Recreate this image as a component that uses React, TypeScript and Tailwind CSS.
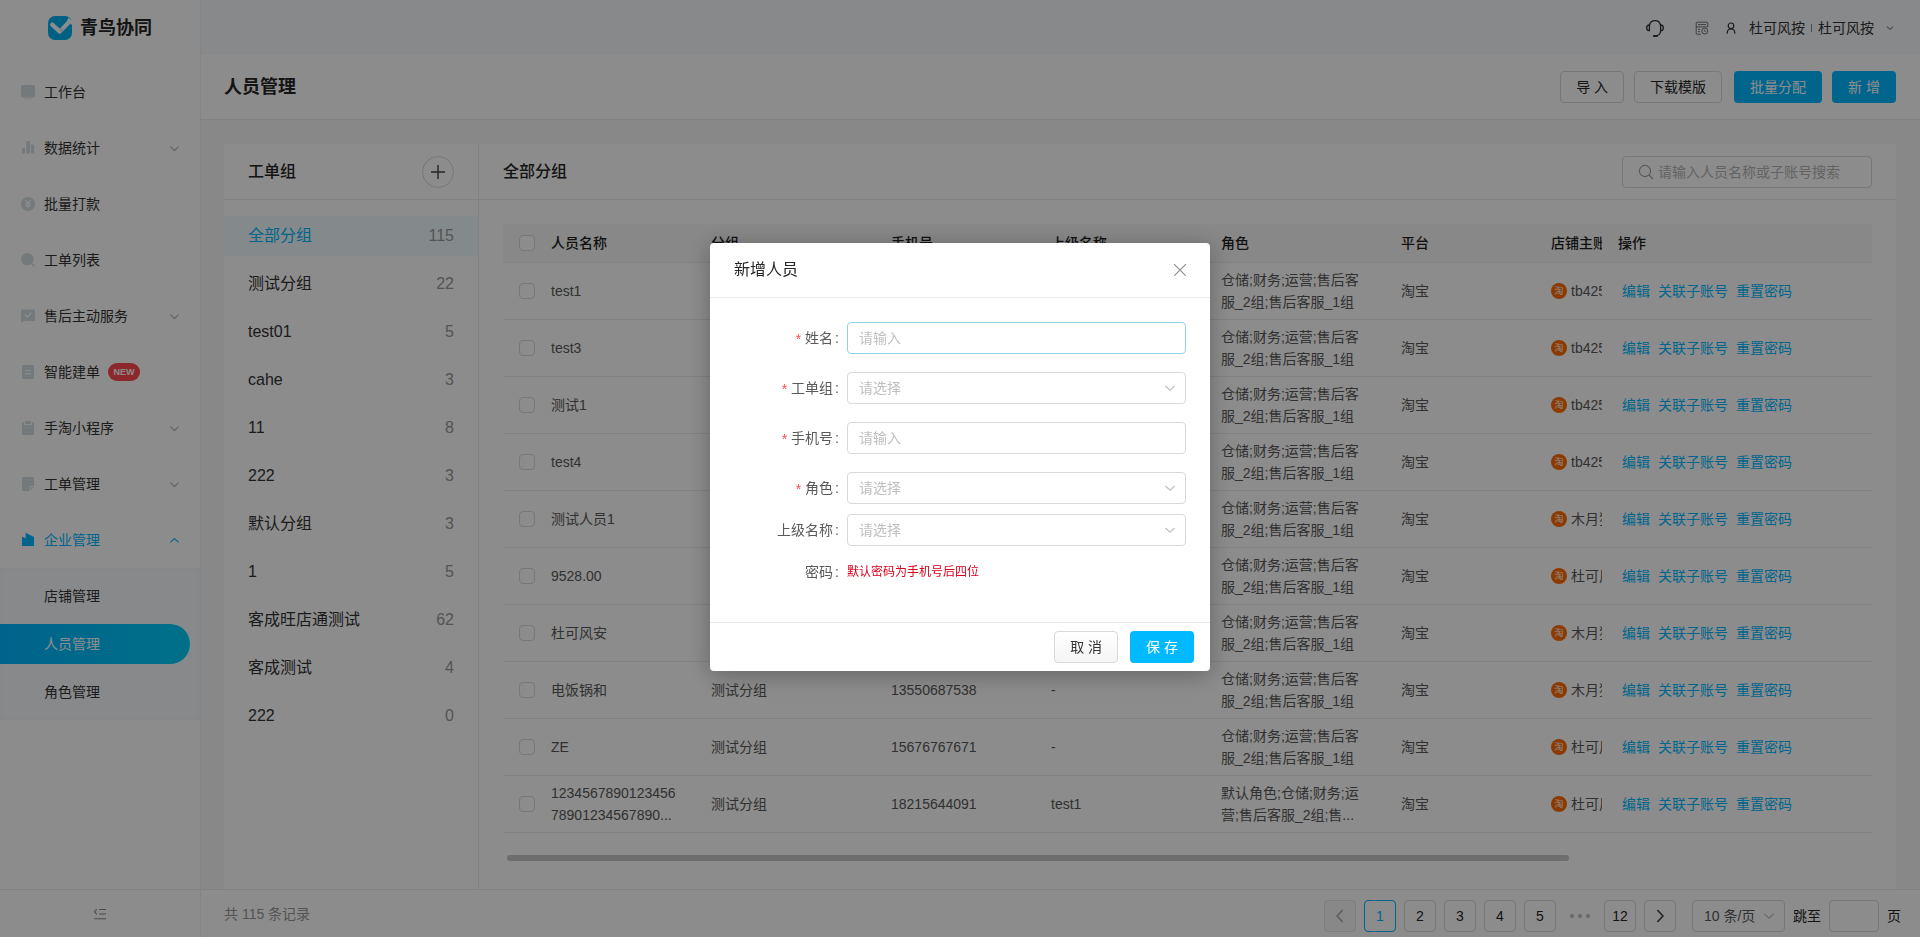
import React from 'react';

type IconProps = { className?: string };

function Chevron({ className = '', up = false }: { className?: string; up?: boolean }) {
  return (
    <svg viewBox="0 0 12 12" fill="none" stroke="currentColor" strokeWidth="1.2" className={className} aria-hidden="true">
      <path d={up ? 'M1.5 8 6 3.8 10.5 8' : 'M1.5 4 6 8.2 10.5 4'} />
    </svg>
  );
}

function Logo() {
  return (
    <svg viewBox="0 0 24 24" className="size-6" aria-hidden="true">
      <rect width="24" height="24" rx="7" fill="#00b0f0" />
      <path d="M20.4 1.6 24 5V9L19 5Z" fill="#fff" />
      <path d="M4.2 8.6 11.6 15.4" stroke="#fff" strokeWidth="4.2" strokeLinecap="round" />
      <path d="M11.8 15.6 21.8 5.2" stroke="#fff" strokeWidth="4.2" strokeLinecap="round" />
      <path d="M12.4 11.4 15.6 14.6 12.4 17.4Z" fill="#c4ebfb" />
    </svg>
  );
}

const menuShapes: Record<string, React.ReactNode> = {
  desk: <path d="M1 2Q1 1 2 1H14Q15 1 15 2V12Q15 13 14 13H2Q1 13 1 12ZM3 13.4H13V14.4H3Z" />,
  chart: <path d="M2 8H5V13.5H2ZM6.4 1H10V13.5H6.4ZM11 4.6H14.2V13.5H11Z" />,
  coin: (
    <>
      <circle cx="8" cy="8" r="7" />
      <path d="M5.4 4 8 7.2 10.6 4M5.2 7.6H10.8M5.2 9.8H10.8M8 7.2V12.2" stroke="#fff" strokeWidth="1.2" fill="none" />
    </>
  ),
  search: (
    <>
      <circle cx="7.4" cy="7.2" r="6.2" />
      <path d="M11 11 14.6 14.4" stroke="currentColor" strokeWidth="1.5" />
    </>
  ),
  service: (
    <>
      <path d="M1 1.5H15V13H4L1 14.8Z" />
      <path d="M5 6.6 7.5 9 11.3 4.8" stroke="#fff" strokeWidth="1.5" fill="none" />
    </>
  ),
  form: (
    <>
      <rect x="2" y="1" width="12" height="14" rx="1" />
      <path d="M5 6.6H11M5 9.6H11" stroke="#fff" strokeWidth="1.3" />
    </>
  ),
  clip: (
    <>
      <path d="M2 2.5H4V5H12V2.5H14V15H2Z" />
      <rect x="5" y="1" width="6" height="3" />
    </>
  ),
  note: <path d="M3 1H13Q14 1 14 2V10H9.5V15H3Q2 15 2 14V2Q2 1 3 1ZM10.6 11H14L10.6 14.6Z" />,
  company: <path d="M2 4.4 5.6 6.6V.8L14 5V14H2Z" />,
};

function MenuIcon({ name, active }: { name: string; active?: boolean }) {
  return (
    <svg viewBox="0 0 16 16" fill="currentColor" className={`size-4 ${active ? 'text-[#00b9ff]' : 'text-[#d3dce2]'}`} aria-hidden="true">
      {menuShapes[name]}
    </svg>
  );
}

function HeadsetIcon({ className = '' }: IconProps) {
  return (
    <svg viewBox="0 0 20 20" fill="none" stroke="currentColor" strokeWidth="1.3" className={className} aria-hidden="true">
      <path d="M4.4 7.4A5.7 5.9 0 0 1 15.6 7.4" />
      <path d="M4.4 7V12.6H3.8Q1.7 12.4 1.7 9.8T4.4 7ZM15.6 7V12.6H16.2Q18.3 12.4 18.3 9.8T15.6 7Z" />
      <path d="M15.8 12.8Q15.4 16.8 11.6 17.8" />
      <path d="M9 18H11.6" strokeWidth="2.2" strokeLinecap="round" />
    </svg>
  );
}

function LogIcon({ className = '' }: IconProps) {
  return (
    <svg viewBox="0 0 14 14" fill="none" stroke="currentColor" strokeWidth="1" className={className} aria-hidden="true">
      <path d="M6 13.2H2Q1.2 13.2 1.2 12.4V2Q1.2 1.2 2 1.2H12Q12.8 1.2 12.8 2V6" />
      <path d="M3 3.6H11M1 5.9H12.6M3 8.3H5M3 10.6H5" />
      <circle cx="9.8" cy="10" r="3" />
      <path d="M9.6 8.6V10.4H11" strokeWidth=".8" />
    </svg>
  );
}

function UserIcon({ className = '' }: IconProps) {
  return (
    <svg viewBox="0 0 12 14" fill="none" stroke="currentColor" strokeWidth="1.2" className={className} aria-hidden="true">
      <circle cx="6" cy="4.8" r="2.8" />
      <path d="M2.2 12.8V11.8Q2.4 8 6 8T9.8 11.8V12.8" />
    </svg>
  );
}

function SearchIcon({ className = '' }: IconProps) {
  return (
    <svg viewBox="0 0 16 16" fill="none" stroke="currentColor" strokeWidth="1.1" className={className} aria-hidden="true">
      <circle cx="7" cy="7" r="5.6" />
      <path d="M11 11 15 15" />
    </svg>
  );
}

const menu = [
  { icon: 'desk', label: '工作台' },
  { icon: 'chart', label: '数据统计', expandable: true },
  { icon: 'coin', label: '批量打款' },
  { icon: 'search', label: '工单列表' },
  { icon: 'service', label: '售后主动服务', expandable: true },
  { icon: 'form', label: '智能建单', badge: 'NEW' },
  { icon: 'clip', label: '手淘小程序', expandable: true },
  { icon: 'note', label: '工单管理', expandable: true },
  { icon: 'company', label: '企业管理', expandable: true, active: true },
];

const subMenu = ['店铺管理', '人员管理', '角色管理'];

const groups: [string, number][] = [
  ['全部分组', 115],
  ['测试分组', 22],
  ['test01', 5],
  ['cahe', 3],
  ['11', 8],
  ['222', 3],
  ['默认分组', 3],
  ['1', 5],
  ['客成旺店通测试', 62],
  ['客成测试', 4],
  ['222', 0],
];

const commonRole = '仓储;财务;运营;售后客服_2组;售后客服_1组';

type Row = { name: string; group?: string; phone?: string; parent?: string; role: string; shop: string };

const rows: Row[] = [
  { name: 'test1', role: commonRole, shop: 'tb425' },
  { name: 'test3', role: commonRole, shop: 'tb425' },
  { name: '测试1', role: commonRole, shop: 'tb425' },
  { name: 'test4', role: commonRole, shop: 'tb425' },
  { name: '测试人员1', role: commonRole, shop: '木月狗' },
  { name: '9528.00', role: commonRole, shop: '杜可风' },
  { name: '杜可风安', role: commonRole, shop: '木月狗' },
  { name: '电饭锅和', group: '测试分组', phone: '13550687538', parent: '-', role: commonRole, shop: '木月狗' },
  { name: 'ZE', group: '测试分组', phone: '15676767671', parent: '-', role: commonRole, shop: '杜可风' },
  {
    name: '123456789012345678901234567890...',
    group: '测试分组',
    phone: '18215644091',
    parent: 'test1',
    role: '默认角色;仓储;财务;运营;售后客服_2组;售...',
    shop: '杜可风',
  },
];

const checkboxClass = 'block size-4 appearance-none rounded border border-[#d9d9d9] bg-white';
const plainButton = 'h-8 rounded border border-[#d9d9d9] bg-white px-[15px] text-[#262626]';
const primaryButton = 'h-8 rounded bg-[#00b9ff] px-4 text-white';

function Sidebar() {
  return (
    <aside className="flex w-[201px] shrink-0 flex-col border-r border-[#eef0f2] bg-white">
      <div className="flex h-[56px] items-center gap-2 pl-12">
        <Logo />
        <span className="text-lg leading-6 font-bold text-[#262626]">青鸟协同</span>
      </div>
      <nav className="flex flex-1 flex-col pt-2">
        {menu.map((m) => (
          <a key={m.label} href="#" className={`flex h-14 items-center pr-5 pl-5 ${m.active ? 'text-[#00b9ff]' : 'text-[#333]'}`}>
            <MenuIcon name={m.icon} active={m.active} />
            <span className="ml-2">{m.label}</span>
            {m.badge && (
              <span className="ml-2 flex h-[18px] w-8 items-center justify-center rounded-full bg-[#ff4750] text-[9px] font-bold text-white">
                {m.badge}
              </span>
            )}
            {m.expandable && <Chevron up={m.active} className={`ml-auto size-[11px] ${m.active ? '' : 'text-[#b0b0b0]'}`} />}
          </a>
        ))}
        <div className="flex flex-col gap-2 bg-[#f8fafc] py-2 shadow-[inset_0_0_6px_#ebf1f5]">
          {subMenu.map((s, i) => (
            <a
              key={s}
              href="#"
              className={`flex h-10 items-center pl-11 ${
                i === 1 ? 'mr-2.5 rounded-r-full bg-linear-to-r from-[#00b4ff] to-[#00cdfa] text-white' : 'text-[#333]'
              }`}
            >
              {s}
            </a>
          ))}
        </div>
      </nav>
      <div className="flex h-12 items-center justify-center border-t border-[#ebebeb]">
        <button aria-label="收起菜单" className="text-[#8c8c8c]">
          <svg viewBox="0 0 14 12" fill="none" stroke="currentColor" strokeWidth="1.1" className="h-3 w-3.5" aria-hidden="true">
            <path d="M6 1.5H13M6 6H13M1 10.8H13M3.8 1.2 1.4 3.8 3.8 6.4" />
          </svg>
        </button>
      </div>
    </aside>
  );
}

function TopBar() {
  return (
    <header className="flex h-[55px] items-center justify-end bg-[#f6f9fc] pr-6.5 text-[#333]">
      <HeadsetIcon className="mr-[30px] size-5" />
      <LogIcon className="mr-4 size-3.5 text-[#777]" />
      <UserIcon className="mr-3 h-3.5 w-3" />
      <span>杜可风按</span>
      <span className="mx-1.5 h-2 w-px bg-[#888]" />
      <span>杜可风按</span>
      <Chevron className="ml-3 size-2" />
    </header>
  );
}

function GroupPanel() {
  return (
    <section className="flex w-[255px] shrink-0 flex-col border-r border-[#ebebeb] bg-white">
      <div className="flex h-14 items-center justify-between border-b border-[#ebebeb] px-6">
        <h2 className="text-base font-medium text-[#262626]">工单组</h2>
        <button aria-label="新增工单组" className="flex size-8 items-center justify-center rounded-full border border-[#d9d9d9] text-[#444]">
          <svg viewBox="0 0 14 14" stroke="currentColor" strokeWidth="1.4" className="size-3.5" aria-hidden="true">
            <path d="M7 0V14M0 7H14" />
          </svg>
        </button>
      </div>
      <ul className="flex flex-col gap-2 pt-4 text-base">
        {groups.map(([name, count], i) => (
          <li key={i} className={`flex h-10 items-center justify-between px-6 ${i === 0 ? 'bg-[#f0f9fe] text-[#00b9ff]' : 'text-[#333]'}`}>
            <span>{name}</span>
            <span className="text-[#999]">{count}</span>
          </li>
        ))}
      </ul>
    </section>
  );
}

function StaffTable() {
  return (
    <div className="overflow-hidden">
      <table className="w-[1744px] table-fixed border-separate border-spacing-0 text-left">
        <colgroup>
          <col className="w-8" />
          <col className="w-40" />
          <col className="w-[180px]" />
          <col className="w-40" />
          <col className="w-[170px]" />
          <col className="w-[180px]" />
          <col className="w-[150px]" />
          <col />
          <col className="w-[270px]" />
        </colgroup>
        <thead>
          <tr className="h-[39px] text-[#1f1f1f] [&>th]:border-b [&>th]:border-[#ebebeb] [&>th]:bg-[#f8f8f8] [&>th]:font-medium">
            <th className="pl-4">
              <input type="checkbox" aria-label="全选" className={checkboxClass} />
            </th>
            <th className="px-4">人员名称</th>
            <th className="px-4">分组</th>
            <th className="px-4">手机号</th>
            <th className="px-4">上级名称</th>
            <th className="px-4">角色</th>
            <th className="px-4">平台</th>
            <th className="px-4">店铺主账号</th>
            <th className="sticky right-0 px-4">操作</th>
          </tr>
        </thead>
        <tbody>
          {rows.map((r) => (
            <tr key={r.name} className="h-[57px] text-[#595959] [&>td]:border-b [&>td]:border-[#ebebeb]">
              <td className="pl-4">
                <input type="checkbox" aria-label={`选择 ${r.name}`} className={checkboxClass} />
              </td>
              <td className="px-4 break-all">{r.name}</td>
              <td className="px-4">{r.group}</td>
              <td className="px-4">{r.phone}</td>
              <td className="px-4">{r.parent}</td>
              <td className="px-4 break-all">{r.role}</td>
              <td className="px-4">淘宝</td>
              <td className="px-4">
                <div className="flex items-center gap-1">
                  <span className="flex size-4 items-center justify-center rounded-full bg-[#ff6a00] text-[9px] leading-none text-white">淘</span>
                  <span>{r.shop}</span>
                </div>
              </td>
              <td className="sticky right-0 bg-white pl-5">
                <div className="flex gap-2 text-[#00b9ff]">
                  <a href="#">编辑</a>
                  <a href="#">关联子账号</a>
                  <a href="#">重置密码</a>
                </div>
              </td>
            </tr>
          ))}
        </tbody>
      </table>
    </div>
  );
}

function Pagination() {
  const item = 'flex size-8 items-center justify-center rounded border';
  return (
    <nav aria-label="分页" className="flex items-center gap-2 text-[#262626]">
      <button aria-label="上一页" disabled className={`${item} border-[#e3e3e3] bg-[#f7f7f7] text-[#aaa]`}>
        <Chevron className="size-4 rotate-90" />
      </button>
      <button className={`${item} border-[#00b9ff] text-[#00b9ff]`}>1</button>
      {['2', '3', '4', '5'].map((p) => (
        <button key={p} className={`${item} border-[#d9d9d9]`}>
          {p}
        </button>
      ))}
      <span className="flex size-8 items-center justify-center gap-1">
        <i className="size-1 rounded-full bg-[#bfbfbf]" />
        <i className="size-1 rounded-full bg-[#bfbfbf]" />
        <i className="size-1 rounded-full bg-[#bfbfbf]" />
      </span>
      <button className={`${item} border-[#d9d9d9]`}>12</button>
      <button aria-label="下一页" className={`${item} border-[#d9d9d9] text-[#444]`}>
        <Chevron className="size-4 -rotate-90" />
      </button>
      <div className="relative ml-2">
        <select aria-label="每页条数" className="h-8 w-[93px] appearance-none rounded border border-[#d9d9d9] bg-white pl-[11px] text-[#595959]">
          <option>10 条/页</option>
        </select>
        <Chevron className="pointer-events-none absolute top-2.5 right-2.5 size-3 text-[#bfbfbf]" />
      </div>
      <label htmlFor="jump">跳至</label>
      <input id="jump" className="h-8 w-[50px] rounded border border-[#d9d9d9] bg-white" />
      <span>页</span>
    </nav>
  );
}

type FieldProps = { id: string; label: string; required?: boolean; kind: 'input' | 'select'; focused?: boolean; tight?: boolean };

const fields: FieldProps[] = [
  { id: 'name', label: '姓名', required: true, kind: 'input', focused: true },
  { id: 'group', label: '工单组', required: true, kind: 'select' },
  { id: 'phone', label: '手机号', required: true, kind: 'input' },
  { id: 'role', label: '角色', required: true, kind: 'select', tight: true },
  { id: 'parent', label: '上级名称', kind: 'select', tight: true },
];

function FieldLabel({ id, label, required }: { id?: string; label: string; required?: boolean }) {
  return (
    <label htmlFor={id} className="flex w-1/4 items-center justify-end pr-2 text-[#595959]">
      {required && <span className="mr-1 pt-0.5 text-[#ff4d4f]">*</span>}
      {label}
      <span className="ml-0.5">:</span>
    </label>
  );
}

function Field({ id, label, required, kind, focused, tight }: FieldProps) {
  return (
    <div className={`flex h-8 ${tight ? 'mb-2.5' : 'mb-4.5'}`}>
      <FieldLabel id={id} label={label} required={required} />
      {kind === 'input' ? (
        <input
          id={id}
          placeholder="请输入"
          className={`min-w-0 flex-1 rounded border px-[11px] placeholder:text-[#bfbfbf] ${focused ? 'border-[#8fd3e6]' : 'border-[#d9d9d9]'}`}
        />
      ) : (
        <div className="relative flex-1">
          <select id={id} className="h-8 w-full appearance-none rounded border border-[#d9d9d9] bg-white px-[11px] text-[#bfbfbf]">
            <option>请选择</option>
          </select>
          <Chevron className="pointer-events-none absolute top-2.5 right-2.5 size-3 text-[#bfbfbf]" />
        </div>
      )}
    </div>
  );
}

function AddStaffDialog() {
  return (
    <div className="fixed inset-0 flex items-start justify-center bg-black/45 pt-[243px]">
      <div role="dialog" aria-labelledby="dialog-title" className="w-[500px] rounded bg-white shadow-[0_4px_24px_rgba(0,0,0,0.3)]">
        <div className="flex h-[55px] items-center justify-between border-b border-[#ebebeb] px-6">
          <h3 id="dialog-title" className="text-base text-[#262626]">新增人员</h3>
          <button aria-label="关闭" className="text-[#8c8c8c]">
            <svg viewBox="0 0 12 12" stroke="currentColor" strokeWidth="1.1" className="size-3" aria-hidden="true">
              <path d="M0 0 12 12M12 0 0 12" />
            </svg>
          </button>
        </div>
        <form className="p-6">
          {fields.map((f) => (
            <Field key={f.id} {...f} />
          ))}
          <div className="mb-2.5 flex h-8 items-center">
            <FieldLabel label="密码" />
            <span className="text-xs text-[#d9001b]">默认密码为手机号后四位</span>
          </div>
        </form>
        <div className="flex justify-end gap-3 border-t border-[#e8e8e8] px-4 py-2">
          <button className="h-8 rounded border border-[#d9d9d9] bg-linear-to-b from-white to-[#f5f5f5] px-[15px] text-[#333]">取 消</button>
          <button className={primaryButton}>保 存</button>
        </div>
      </div>
    </div>
  );
}

export default function App() {
  return (
    <div className="flex h-screen overflow-hidden bg-[#f8f8f8] font-['Liberation_Sans','Noto_Sans_CJK_SC',sans-serif] text-sm leading-[22px]">
      <Sidebar />
      <div className="flex min-w-0 flex-1 flex-col">
        <TopBar />
        <div className="flex h-[65px] items-center justify-between border-b border-[#ebebeb] bg-white px-6 pl-[23px]">
          <h1 className="text-lg font-bold text-[#262626]">人员管理</h1>
          <div className="flex gap-3">
            <div className="flex gap-2.5">
              <button className={plainButton}>导 入</button>
              <button className={plainButton}>下载模版</button>
            </div>
            <div className="flex gap-2.5">
              <button className={primaryButton}>批量分配</button>
              <button className={primaryButton}>新 增</button>
            </div>
          </div>
        </div>
        <main className="flex min-h-0 flex-1 px-6 pt-6 pl-[23px]">
          <GroupPanel />
          <section className="min-w-0 flex-1 bg-white">
            <div className="flex h-14 items-center justify-between border-b border-[#ebebeb] px-6">
              <h2 className="text-base font-medium text-[#262626]">全部分组</h2>
              <label className="flex h-8 w-[250px] items-center gap-1 rounded border border-[#d9d9d9] pl-[15px]">
                <SearchIcon className="size-4 text-[#a0a0a0]" />
                <input placeholder="请输入人员名称或子账号搜索" className="min-w-0 flex-1 bg-transparent placeholder:text-[#b5b5b5]" />
              </label>
            </div>
            <div className="p-6">
              <StaffTable />
              <div className="mx-1 mt-[22px] h-1.5">
                <div className="h-1.5 w-[78%] rounded-full bg-[#c8c8c8]" />
              </div>
            </div>
          </section>
        </main>
        <footer className="flex h-12 shrink-0 items-center justify-between border-t border-[#ebebeb] bg-white pr-[19px] pl-[23px]">
          <span className="text-[#999]">共 115 条记录</span>
          <div className="pt-1">
            <Pagination />
          </div>
        </footer>
      </div>
      <AddStaffDialog />
    </div>
  );
}
